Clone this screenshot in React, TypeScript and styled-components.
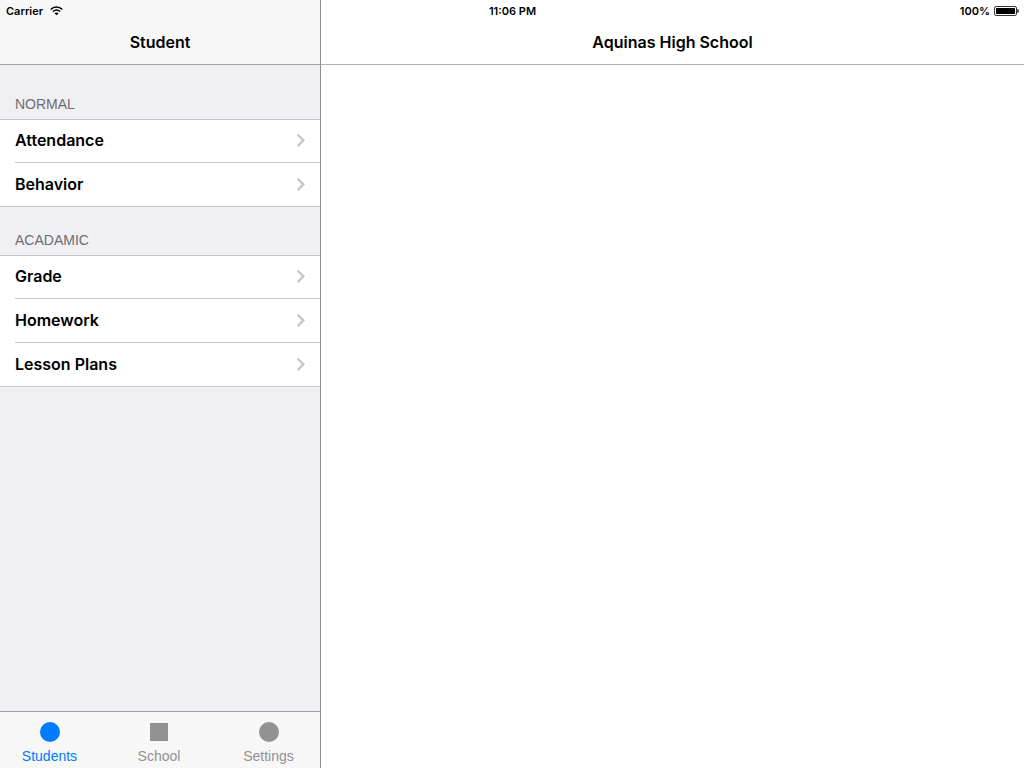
import React, { useState } from "react";
import styled, { createGlobalStyle } from "styled-components";

const GlobalStyle = createGlobalStyle`
  *, *::before, *::after { box-sizing: border-box; }
  body {
    margin: 0;
    background: #ffffff;
    color: #000000;
    font-family: "Helvetica Neue", "Liberation Sans", Arial, sans-serif;
  }
`;

const strongFont = `"Helvetica Neue", Inter, "Liberation Sans", sans-serif`;

const Screen = styled.div`
  position: relative;
  display: grid;
  grid-template-columns: 321px 1fr;
  min-height: 100vh;
`;

const StatusBar = styled.div`
  position: absolute;
  top: 0;
  left: 0;
  right: 0;
  display: grid;
  grid-template-columns: 1fr auto 1fr;
  align-items: center;
  height: 20px;
  padding: 2px 5px 0 6px;
  font-family: ${strongFont};
  font-size: 11px;
  font-weight: 600;
  line-height: 18px;
`;

const StatusGroup = styled.div<{ $end?: boolean }>`
  display: flex;
  align-items: center;
  justify-content: ${(p) => (p.$end ? "flex-end" : "flex-start")};
  gap: ${(p) => (p.$end ? 4 : 7)}px;
`;

const Sidebar = styled.aside`
  display: flex;
  flex-direction: column;
  background: #efeff4;
  border-right: 1px solid #8e8e93;
`;

const Detail = styled.main`
  background: #ffffff;
`;

const NavBar = styled.header<{ $tinted?: boolean }>`
  display: flex;
  align-items: center;
  justify-content: center;
  height: 65px;
  padding-top: 20px;
  background: ${(p) => (p.$tinted ? "#f7f7f7" : "#ffffff")};
  border-bottom: 1px solid ${(p) => (p.$tinted ? "#a3a3a8" : "#b2b2b2")};
`;

const Title = styled.h1`
  margin: 0;
  font-family: ${strongFont};
  font-size: 16px;
  font-weight: 600;
  line-height: 20px;
`;

const Menu = styled.nav`
  flex: 1;
  padding-top: 6px;
`;

const SectionTitle = styled.h2`
  display: flex;
  align-items: flex-end;
  height: 48px;
  margin: 0;
  padding: 0 15px 7px;
  color: #6d6d72;
  font-size: 14px;
  font-weight: 400;
  line-height: 16px;
`;

const List = styled.ul`
  margin: 0;
  padding: 0;
  list-style: none;
  background: #ffffff;
`;

const Item = styled.li`
  height: 44px;
  padding-left: 15px;

  &:first-child { border-top: 1px solid #c8c7cc; }
  &:last-child { padding-left: 0; border-bottom: 1px solid #c8c7cc; }
  &:last-child > a { padding-left: 15px; border-bottom: 0; }
`;

const RowLink = styled.a`
  display: flex;
  align-items: center;
  justify-content: space-between;
  height: 100%;
  padding: 0 15px 2px 0;
  border-bottom: 1px solid #c8c7cc;
  color: #000000;
  font-family: ${strongFont};
  font-size: 16px;
  font-weight: 600;
  line-height: 20px;
  text-decoration: none;
`;

const TabBar = styled.nav`
  display: flex;
  justify-content: space-between;
  height: 57px;
  padding: 0 13px 0 11px;
  background: #f7f7f7;
  border-top: 1px solid #a0a0a3;
`;

const TabButton = styled.button<{ $active: boolean }>`
  display: flex;
  flex-direction: column;
  align-items: center;
  gap: 6px;
  width: 77px;
  padding: 10px 0 0;
  border: 0;
  background: none;
  color: ${(p) => (p.$active ? "#007aff" : "#929292")};
  font-family: inherit;
  font-size: 14px;
  line-height: 16px;
  cursor: pointer;
`;

const sections = [
  { title: "NORMAL", items: ["Attendance", "Behavior"] },
  { title: "ACADAMIC", items: ["Grade", "Homework", "Lesson Plans"] },
];

const tabs = [
  { label: "Students", shape: "circle" },
  { label: "School", shape: "square" },
  { label: "Settings", shape: "circle" },
];

const WifiIcon = () => (
  <svg width="13" height="10" viewBox="0 0 13 10" fill="none" stroke="#000" aria-hidden="true">
    <path d="M0.7 3.5C4 0.2 9 0.2 12.3 3.5" strokeWidth="1.5" />
    <path d="M2.8 5.6C5 3.6 8 3.6 10.2 5.6" strokeWidth="1.4" />
    <path d="M6.5 9.3L4.4 7.2C5.6 6.1 7.4 6.1 8.6 7.2Z" fill="#000" stroke="none" />
  </svg>
);

const BatteryIcon = () => (
  <svg width="25" height="10" viewBox="0 0 25 10" aria-hidden="true">
    <rect x="0.5" y="0.5" width="22" height="9" rx="1.6" fill="none" stroke="#000" strokeWidth="0.8" />
    <rect x="2" y="2" width="19" height="6" rx="0.5" fill="#000" />
    <path d="M23.4 3C25.2 3.6 25.2 6.4 23.4 7Z" fill="#000" />
  </svg>
);

const Chevron = () => (
  <svg width="9" height="14" viewBox="0 0 9 14" fill="none" aria-hidden="true">
    <path d="M1.6 1.6L7.4 7.4L1.6 13.2" stroke="#c7c7cc" strokeWidth="2.4" />
  </svg>
);

const TabIcon = ({ shape }: { shape: string }) => (
  <svg width="20" height="20" viewBox="0 0 20 20" fill="currentColor" aria-hidden="true">
    {shape === "circle" ? <circle cx="10" cy="10" r="10" /> : <rect x="1" y="1" width="18" height="18" />}
  </svg>
);

export default function App() {
  const [active, setActive] = useState("Students");

  return (
    <>
      <GlobalStyle />
      <Screen>
        <Sidebar>
          <NavBar $tinted>
            <Title>Student</Title>
          </NavBar>
          <Menu aria-label="Student">
            {sections.map((section) => (
              <section key={section.title}>
                <SectionTitle>{section.title}</SectionTitle>
                <List>
                  {section.items.map((item) => (
                    <Item key={item}>
                      <RowLink href="#">
                        {item}
                        <Chevron />
                      </RowLink>
                    </Item>
                  ))}
                </List>
              </section>
            ))}
          </Menu>
          <TabBar aria-label="Tabs">
            {tabs.map((tab) => (
              <TabButton
                key={tab.label}
                type="button"
                $active={tab.label === active}
                onClick={() => setActive(tab.label)}
              >
                <TabIcon shape={tab.shape} />
                {tab.label}
              </TabButton>
            ))}
          </TabBar>
        </Sidebar>
        <Detail>
          <NavBar>
            <Title>Aquinas High School</Title>
          </NavBar>
        </Detail>
        <StatusBar>
          <StatusGroup>
            Carrier
            <WifiIcon />
          </StatusGroup>
          <time>11:06 PM</time>
          <StatusGroup $end>
            100%
            <BatteryIcon />
          </StatusGroup>
        </StatusBar>
      </Screen>
    </>
  );
}
